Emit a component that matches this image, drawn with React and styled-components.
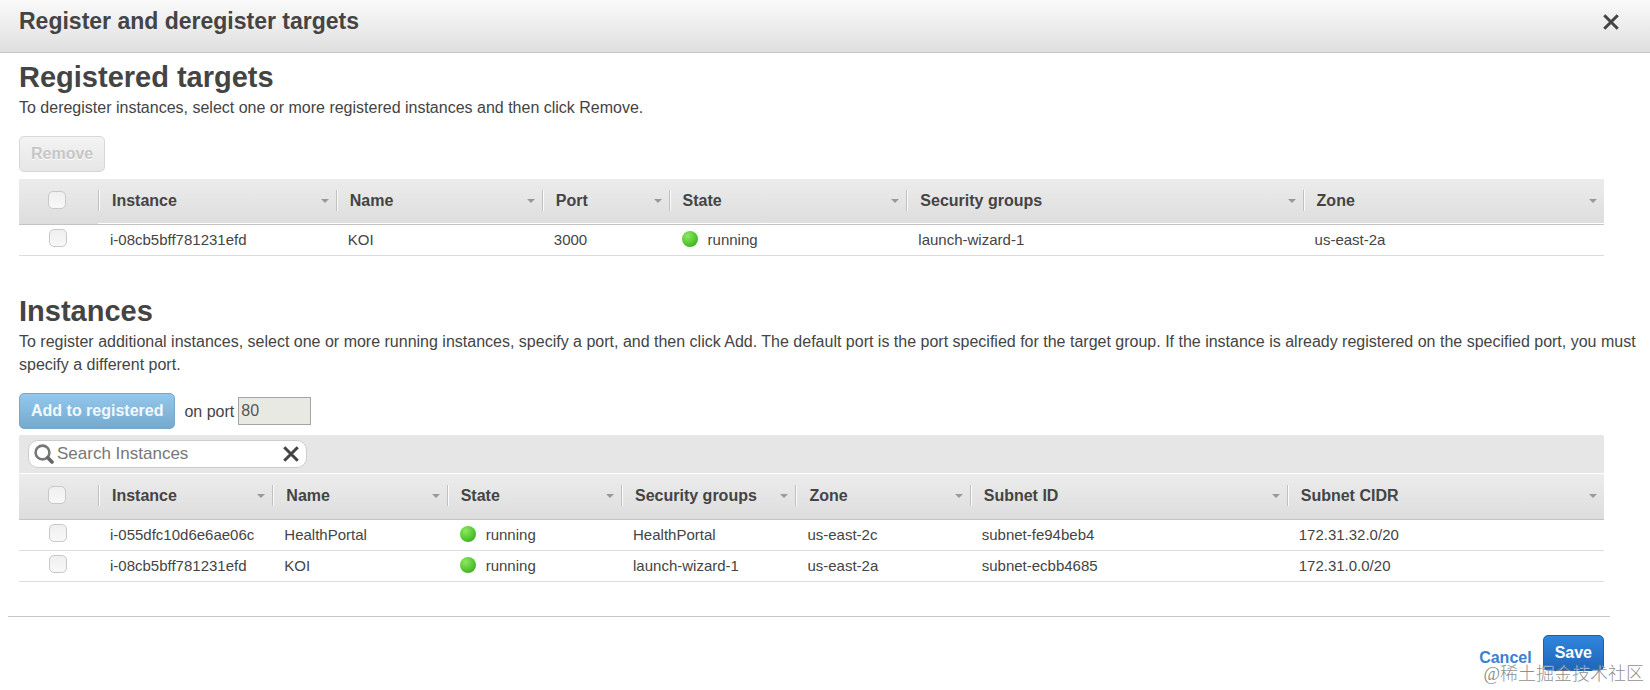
import React, { useState } from 'react';
import styled, { createGlobalStyle } from 'styled-components';

const GlobalStyle = createGlobalStyle`
  * {
    box-sizing: border-box;
  }

  body {
    margin: 0;
    background-color: #fff;
    color: #444;
    font-family: 'Liberation Sans', Arial, sans-serif;
    font-size: 16px;
    line-height: 23px;
  }

  button,
  input {
    font-family: inherit;
    font-size: 16px;
  }
`;

const Dialog = styled.div`
  position: relative;
  width: 100%;
  min-height: 100vh;
`;

const DialogHeader = styled.header`
  display: flex;
  justify-content: space-between;
  align-items: flex-start;
  height: 53px;
  padding: 8px 29px 0 19px;
  border-bottom: 1px solid #c3c3c3;
  background-image: linear-gradient(to bottom, #fafafa, #dfdfdf);
`;

const DialogTitle = styled.h1`
  margin: 0;
  font-size: 23px;
  line-height: 27px;
`;

const IconButton = styled.button`
  display: flex;
  justify-content: center;
  align-items: center;
  width: 20px;
  height: 28px;
  padding: 0;
  border: none;
  background: none;
  cursor: pointer;
`;

const Content = styled.main`
  padding: 7px 10px 0 19px;
`;

const Section = styled.section`
  margin-bottom: ${props => props.$gap}px;
`;

const SectionTitle = styled.h2`
  margin: 0;
  font-size: 29px;
  line-height: 34px;
`;

const Hint = styled.p`
  margin: 2px 0 17px;
`;

const Actions = styled.div`
  display: flex;
  align-items: center;
  margin-bottom: ${props => props.$gap}px;
`;

const Button = styled.button`
  height: 36px;
  padding: 0 11px;
  border: 1px solid #225fa8;
  border-radius: 5px;
  background-image: linear-gradient(to bottom, #2f86dd, #1f66b8);
  color: #fff;
  font-weight: bold;
  cursor: pointer;
`;

const RemoveButton = styled(Button)`
  border-color: #d8d8d8;
  background-image: linear-gradient(to bottom, #f3f3f3, #e6e6e6);
  color: #c6c6c6;
  text-shadow: 0 1px 0 #fff;
  cursor: default;
`;

const AddButton = styled(Button)`
  border-color: #7aa7c9;
  background-image: linear-gradient(to bottom, #93c8ec, #75aace);
  color: #f0f9ff;
`;

const PortLabel = styled.label`
  margin: 0 4px 0 9px;
`;

const PortInput = styled.input`
  width: 73px;
  height: 28px;
  padding: 0 2px;
  border: 1px solid #a5a5a5;
  background-color: #e9e9e4;
  color: #555;
`;

const Grid = styled.div`
  margin-right: 36px;
`;

const Toolbar = styled.div`
  padding: 5px 9px;
  border-bottom: 1px solid #fff;
  border-radius: 2px 2px 0 0;
  background-color: #e6e6e6;
`;

const SearchBox = styled.div`
  display: flex;
  align-items: center;
  width: 279px;
  height: 28px;
  padding: 0 5px;
  border: 1px solid #ccc;
  border-radius: 10px;
  background-color: #fff;
`;

const SearchInput = styled.input`
  flex: 1;
  min-width: 0;
  padding: 0 3px;
  border: none;
  outline: none;
  background: none;
  color: #444;
  font-size: 17px;

  &::placeholder {
    color: #777;
    opacity: 1;
  }
`;

const Table = styled.table`
  width: 100%;
  table-layout: fixed;
  border-collapse: separate;
  border-spacing: 0;
`;

const HeadCell = styled.th`
  width: ${props => props.$width || 'auto'};
  height: 46px;
  padding: 0 0 2px;
  border-bottom: 1px solid #c4c4c4;
  background-image: linear-gradient(to bottom, #ececec, #dddddd);
  box-shadow: ${props => (props.$ridge ? 'inset 0 -1px 0 #fff' : 'none')};
  text-align: left;
`;

const CheckHeadCell = styled(HeadCell)`
  width: 79px;
  padding: 0 0 4px 29px;
`;

const HeadLabel = styled.div`
  display: flex;
  justify-content: space-between;
  align-items: center;
  height: 21px;
  padding: 0 7px 0 13px;
  border-left: 1px solid #c0c0c0;
  box-shadow: inset 1px 0 0 #fafafa;
`;

const SortArrow = styled.span`
  border-top: 4px solid #999;
  border-left: 4px solid transparent;
  border-right: 4px solid transparent;
`;

const Cell = styled.td`
  height: 31px;
  padding: 0 0 2px 12px;
  border-bottom: 1px solid #ddd;
  font-size: 15px;
  white-space: nowrap;
`;

const CheckCell = styled(Cell)`
  padding: 0 0 4px 30px;
`;

const Checkbox = styled.input.attrs({ type: 'checkbox' })`
  display: block;
  appearance: none;
  width: 18px;
  height: 18px;
  margin: 0;
  border: 1px solid #c8c8c8;
  border-radius: 5px;
  background-image: linear-gradient(to bottom, #efefef, #f8f8f8);

  &:checked {
    background-image: linear-gradient(to bottom, #93c8ec, #75aace);
  }
`;

const State = styled.span`
  display: flex;
  align-items: center;
  gap: 10px;
  padding-left: 1px;

  &:before {
    content: '';
    width: 16px;
    height: 16px;
    border-radius: 50%;
    background-image: radial-gradient(circle at 35% 30%, #8fe860, #58c934 50%, #2f9a17);
  }
`;

const Footer = styled.footer`
  display: flex;
  justify-content: flex-end;
  align-items: flex-start;
  gap: 11px;
  margin: 0 40px 0 8px;
  padding: 18px 6px 0;
  border-top: 1px solid #c8c8c8;
`;

const CancelLink = styled.a`
  margin-top: 11px;
  color: #3a80d4;
  font-weight: bold;
  text-decoration: none;
`;

const Watermark = styled.div`
  position: absolute;
  right: 6px;
  bottom: 4px;
  color: rgba(120, 120, 120, 0.85);
  font-family: 'Liberation Serif', 'Noto Sans CJK SC', serif;
  font-size: 18px;
  font-weight: 300;
  line-height: 24px;
  text-shadow: 1px 1px 0 rgba(255, 255, 255, 0.6);
  pointer-events: none;
`;

const targetColumns = [
  { key: 'instance', label: 'Instance', width: '15%' },
  { key: 'name', label: 'Name', width: '13%' },
  { key: 'port', label: 'Port', width: '8%' },
  { key: 'state', label: 'State', width: '15%' },
  { key: 'groups', label: 'Security groups', width: '25%' },
  { key: 'zone', label: 'Zone' },
];

const targets = [
  {
    instance: 'i-08cb5bff781231efd',
    name: 'KOI',
    port: '3000',
    state: 'running',
    groups: 'launch-wizard-1',
    zone: 'us-east-2a',
  },
];

const instanceColumns = [
  { key: 'instance', label: 'Instance', width: '11%' },
  { key: 'name', label: 'Name', width: '11%' },
  { key: 'state', label: 'State', width: '11%' },
  { key: 'groups', label: 'Security groups', width: '11%' },
  { key: 'zone', label: 'Zone', width: '11%' },
  { key: 'subnet', label: 'Subnet ID', width: '20%' },
  { key: 'cidr', label: 'Subnet CIDR' },
];

const instances = [
  {
    instance: 'i-055dfc10d6e6ae06c',
    name: 'HealthPortal',
    state: 'running',
    groups: 'HealthPortal',
    zone: 'us-east-2c',
    subnet: 'subnet-fe94beb4',
    cidr: '172.31.32.0/20',
  },
  {
    instance: 'i-08cb5bff781231efd',
    name: 'KOI',
    state: 'running',
    groups: 'launch-wizard-1',
    zone: 'us-east-2a',
    subnet: 'subnet-ecbb4685',
    cidr: '172.31.0.0/20',
  },
];

function CrossIcon({ size }) {
  return (
    <svg width={size} height={size} viewBox="0 0 16 16" aria-hidden="true">
      <path d="M2 2L14 14M14 2L2 14" stroke="#444" strokeWidth="2.7" />
    </svg>
  );
}

function SearchIcon() {
  return (
    <svg width="20" height="20" viewBox="0 0 20 20" fill="none" aria-hidden="true">
      <circle cx="8.5" cy="8.5" r="6.9" stroke="#777" strokeWidth="2.6" />
      <path d="M13.8 13.8L18 18" stroke="#666" strokeWidth="3.6" strokeLinecap="round" />
    </svg>
  );
}

function DataTable({ columns, rows, ridge }) {
  return (
    <Table>
      <thead>
        <tr>
          <CheckHeadCell>
            <Checkbox aria-label="Select all" />
          </CheckHeadCell>
          {columns.map(column => (
            <HeadCell key={column.key} $width={column.width} $ridge={ridge}>
              <HeadLabel>
                {column.label}
                <SortArrow />
              </HeadLabel>
            </HeadCell>
          ))}
        </tr>
      </thead>
      <tbody>
        {rows.map(row => (
          <tr key={row.instance}>
            <CheckCell>
              <Checkbox aria-label={row.instance} />
            </CheckCell>
            {columns.map(column => (
              <Cell key={column.key}>
                {column.key === 'state' ? <State>{row.state}</State> : row[column.key]}
              </Cell>
            ))}
          </tr>
        ))}
      </tbody>
    </Table>
  );
}

export default function App() {
  const [port, setPort] = useState('80');
  const [search, setSearch] = useState('');

  return (
    <Dialog>
      <GlobalStyle />
      <DialogHeader>
        <DialogTitle>Register and deregister targets</DialogTitle>
        <IconButton type="button" aria-label="Close">
          <CrossIcon size={18} />
        </IconButton>
      </DialogHeader>
      <Content>
        <Section $gap={38}>
          <SectionTitle>Registered targets</SectionTitle>
          <Hint>
            To deregister instances, select one or more registered instances and then click Remove.
          </Hint>
          <Actions $gap={7}>
            <RemoveButton type="button" disabled>
              Remove
            </RemoveButton>
          </Actions>
          <Grid>
            <DataTable columns={targetColumns} rows={targets} ridge />
          </Grid>
        </Section>
        <Section $gap={34}>
          <SectionTitle>Instances</SectionTitle>
          <Hint>
            To register additional instances, select one or more running instances, specify a port,
            and then click Add. The default port is the port specified for the target group. If the
            instance is already registered on the specified port, you must specify a different port.
          </Hint>
          <Actions $gap={6}>
            <AddButton type="button">Add to registered</AddButton>
            <PortLabel htmlFor="port">on port</PortLabel>
            <PortInput id="port" value={port} onChange={e => setPort(e.target.value)} />
          </Actions>
          <Grid>
            <Toolbar>
              <SearchBox>
                <SearchIcon />
                <SearchInput
                  aria-label="Search Instances"
                  placeholder="Search Instances"
                  value={search}
                  onChange={e => setSearch(e.target.value)}
                />
                <IconButton type="button" aria-label="Clear search" onClick={() => setSearch('')}>
                  <CrossIcon size={18} />
                </IconButton>
              </SearchBox>
            </Toolbar>
            <DataTable columns={instanceColumns} rows={instances} />
          </Grid>
        </Section>
      </Content>
      <Footer>
        <CancelLink href="#cancel">Cancel</CancelLink>
        <Button type="button">Save</Button>
      </Footer>
      <Watermark>@稀土掘金技术社区</Watermark>
    </Dialog>
  );
}
